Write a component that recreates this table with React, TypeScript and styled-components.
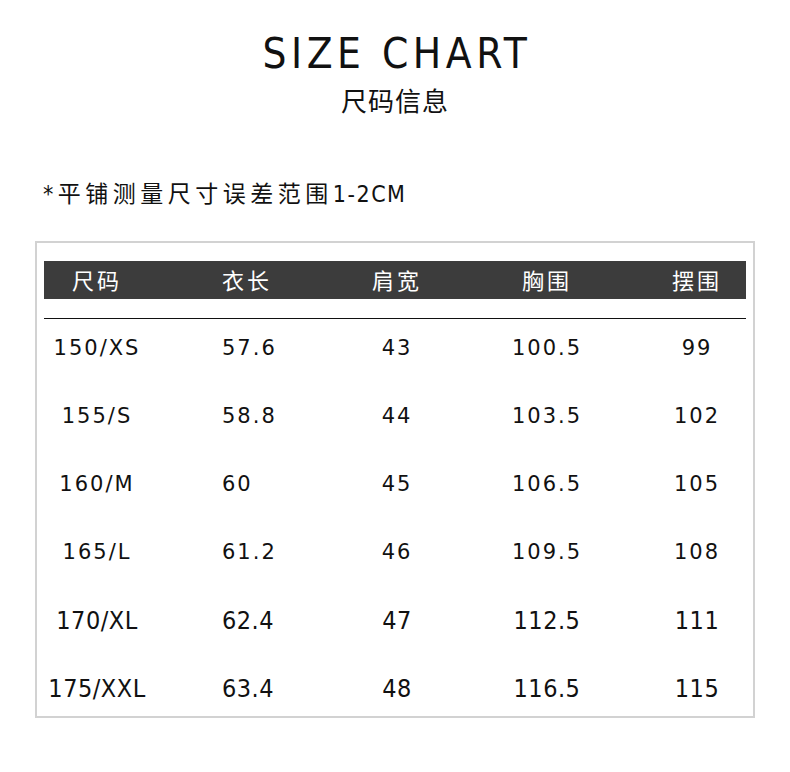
import React from 'react';
import styled, { createGlobalStyle } from 'styled-components';

const GlobalStyle = createGlobalStyle`
  html, body {
    margin: 0;
    padding: 0;
    background: #ffffff;
  }
`;

const NARROW = `"DejaVu Sans Condensed", "Noto Sans CJK SC", sans-serif`;
const CJK = `"Noto Sans CJK SC", sans-serif`;

const Page = styled.div`
  width: 790px;
  height: 772px;
  display: flex;
  flex-direction: column;
  color: #111;
`;

const Title = styled.h1`
  margin: 29px 0 0;
  font-family: ${NARROW};
  font-weight: 400;
  font-size: 42px;
  line-height: 50px;
  letter-spacing: 4.5px;
  text-align: center;
  padding-left: 4px;
`;

const Subtitle = styled.div`
  margin-top: 5px;
  font-family: ${CJK};
  font-size: 26px;
  line-height: 32px;
  text-align: center;
  letter-spacing: 1px;
`;

const Note = styled.div`
  margin: 64px 0 0 43px;
  font-family: ${NARROW};
  font-size: 23px;
  line-height: 28px;
  letter-spacing: 4.5px;
`;

const Range = styled.span`
  letter-spacing: 1.5px;
`;

const TableBox = styled.div`
  box-sizing: border-box;
  margin: 33px 0 0 35px;
  width: 720px;
  height: 477px;
  border: 2px solid #d2d2d2;
  padding: 18px 7px 0;
`;

const Grid = styled.div`
  display: grid;
  grid-template-columns: repeat(5, 150px);
  justify-content: center;
  padding-left: 4px;
`;

const HeaderBar = styled(Grid)`
  height: 38px;
  background: #3c3c3c;
  color: #fff;
  font-family: ${CJK};
  font-size: 22px;
  line-height: 36px;
  letter-spacing: 3px;
`;

const HeaderCell = styled.div`
  text-align: center;
`;

const Divider = styled.div`
  height: 1px;
  background: #111;
  margin-top: 19px;
`;

const Rows = styled.div`
  display: flex;
  flex-direction: column;
  gap: 10px;
`;

const Row = styled(Grid)<{ $narrow?: boolean }>`
  height: 58px;
  align-items: center;
  font-family: ${(p) => (p.$narrow ? NARROW : `"DejaVu Sans", sans-serif`)};
  font-size: ${(p) => (p.$narrow ? '25px' : '21px')};
  letter-spacing: ${(p) => (p.$narrow ? '0.5px' : '2px')};
`;

const Cell = styled.div<{ $left?: boolean }>`
  text-align: ${(p) => (p.$left ? 'left' : 'center')};
  padding-left: ${(p) => (p.$left ? '50px' : '0')};
`;

const headers = ['尺码', '衣长', '肩宽', '胸围', '摆围'];

const data = [
  ['150/XS', '57.6', '43', '100.5', '99'],
  ['155/S', '58.8', '44', '103.5', '102'],
  ['160/M', '60', '45', '106.5', '105'],
  ['165/L', '61.2', '46', '109.5', '108'],
  ['170/XL', '62.4', '47', '112.5', '111'],
  ['175/XXL', '63.4', '48', '116.5', '115'],
];

export default function App() {
  return (
    <Page>
      <GlobalStyle />
      <Title>SIZE CHART</Title>
      <Subtitle>尺码信息</Subtitle>
      <Note>
        *平铺测量尺寸误差范围<Range>1-2CM</Range>
      </Note>
      <TableBox>
        <HeaderBar>
          {headers.map((h) => (
            <HeaderCell key={h}>{h}</HeaderCell>
          ))}
        </HeaderBar>
        <Divider />
        <Rows>
          {data.map((row, i) => (
            <Row key={row[0]} $narrow={i >= 4}>
              {row.map((v, j) => (
                <Cell key={j} $left={j === 1}>
                  {v}
                </Cell>
              ))}
            </Row>
          ))}
        </Rows>
      </TableBox>
    </Page>
  );
}
